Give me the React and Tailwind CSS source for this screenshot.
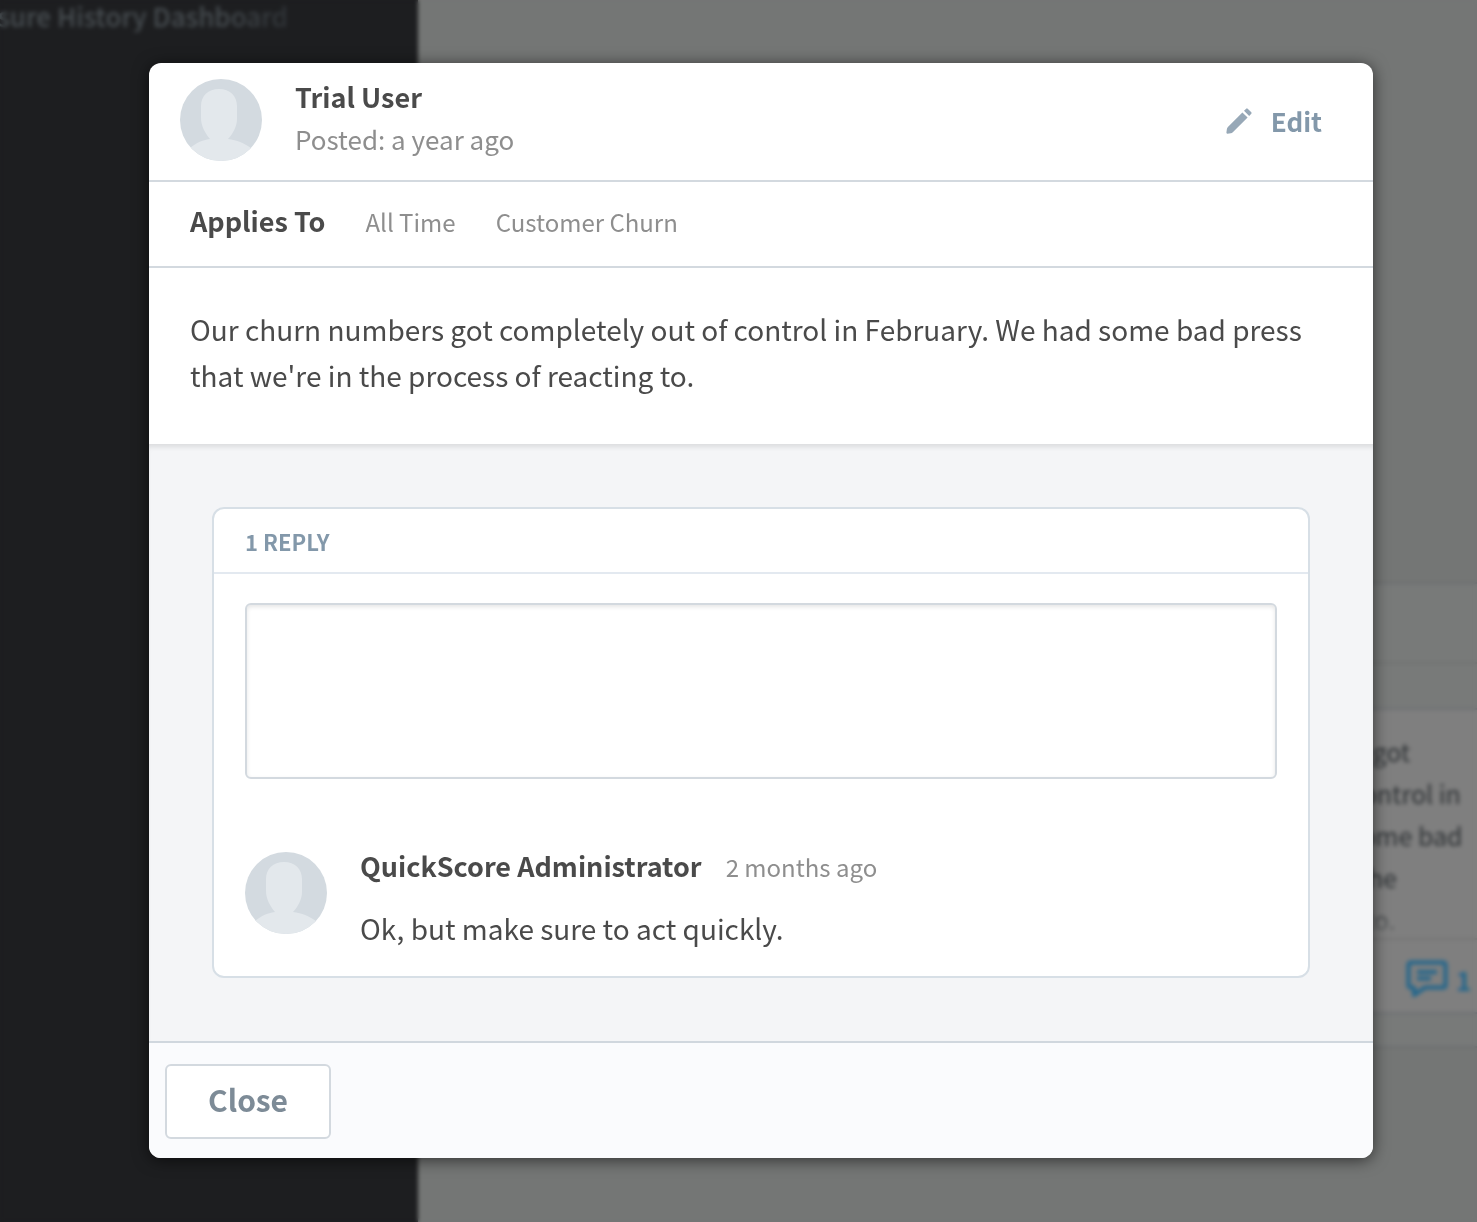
function Avatar() {
  return (
    <svg viewBox="0 0 82 82" className="size-[82px] shrink-0 rounded-full" aria-hidden="true">
      <rect width="82" height="82" fill="#d3dae0" />
      <path
        d="M39 10C50 10 57 17 57 27V40C57 47 53 55 48 60C57 61 64 64 71 69V82H10V69C16 64 22 61 30 60C25 54 21 47 21 39V27C21 17 28 10 39 10Z"
        fill="#e3e8ec"
      />
    </svg>
  );
}

function PencilIcon() {
  return (
    <svg viewBox="0 0 26 26" className="size-[26px] shrink-0" fill="#97a8b7" aria-hidden="true">
      <path d="M16.4 4.4L21.6 9.6L6.8 24.2Q6 25 4.8 25.2L1.4 25.7Q.3 25.8 .4 24.6L.9 20.9Q1.1 19.7 1.9 18.9Z" />
      <path d="M18 2.8L20.2 .7Q20.9 0 21.7 .7L25.3 4.3Q26 5 25.3 5.8L23.2 8Z" />
    </svg>
  );
}

function CommentIcon() {
  return (
    <svg viewBox="0 0 42 38" className="h-[38px] w-[42px]" fill="none" stroke="currentColor" aria-hidden="true">
      <path d="M5 2.5H37Q39.5 2.5 39.5 5V25Q39.5 27.5 37 27.5H19L8 35V27.5H5Q2.5 27.5 2.5 25V5Q2.5 2.5 5 2.5Z" strokeWidth="4" strokeLinejoin="round" />
      <path d="M11 12H31M11 18.5H25" strokeWidth="4" />
    </svg>
  );
}

function Dashboard() {
  return (
    <div className="flex min-h-screen overflow-hidden" aria-hidden="true">
      <aside className="w-[418px] shrink-0 bg-[#1d1e20]">
        <div className="flex w-[288px] justify-end overflow-hidden whitespace-nowrap bg-linear-to-r from-[#484e52] from-75% to-[#303438] bg-clip-text text-[26px] leading-8 font-medium text-transparent">
          Measure History Dashboard
        </div>
      </aside>
      <main className="flex flex-1 flex-col pt-[582px]">
        <section className="border-y-2 border-[#6c6e70] bg-[#787a79] pb-8">
          <div className="h-20 border-b-2 border-[#707271]" />
          <div className="h-11" />
          <article className="border-y-2 border-[#6c6f73] bg-[#7f7f7f] pl-[722px]">
            <p className="h-[228px] bg-linear-to-b from-[#2c3033] from-80% to-[#686a6b] bg-clip-text pt-5 text-[25px] leading-[42px] whitespace-nowrap text-transparent">
              Our churn numbers got
              <br />
              completely out of control in
              <br />
              February. We had some bad
              <br />
              press that we&apos;re in the
              <br />
              process of reacting to.
            </p>
            <div className="flex h-[74px] items-center justify-end gap-2 border-t-2 border-[#737474] pt-1.5 pr-1.5 text-[26px] font-bold text-[#22668c]">
              <CommentIcon />
              <span>1</span>
            </div>
          </article>
        </section>
      </main>
    </div>
  );
}

export default function App() {
  return (
    <div className="relative min-h-screen overflow-hidden bg-[#747675] font-['Noto_Sans_CJK_SC','Noto_Sans',sans-serif] text-[#4a4a4a]">
      <Dashboard />
      <div className="absolute inset-0 pt-[63px] pr-[104px] pb-16 pl-[149px] backdrop-blur-[2px]">
        <div role="dialog" aria-modal="true" aria-label="Note" className="overflow-hidden rounded-xl bg-white shadow-[0_2px_16px_rgba(0,0,0,0.6)]">
          <header className="flex items-start border-b-2 border-[#d3d9df] px-[31px] pt-4 pb-[17px]">
            <Avatar />
            <div className="ml-[33px] flex-1">
              <h2 className="text-[27px] leading-9 font-bold">Trial User</h2>
              <p className="text-[26px] leading-[48px] text-[#8e8e8e]">Posted: a year ago</p>
            </div>
            <button type="button" className="mr-5 flex items-center gap-[19px] self-center text-[26px] leading-10 font-bold text-[#8398aa]">
              <PencilIcon />
              Edit
            </button>
          </header>

          <div className="flex items-baseline gap-10 border-b-2 border-[#d3d9df] px-[41px] pt-[19px] pb-6">
            <h3 className="text-[27px] leading-10 font-bold">Applies To</h3>
            <span className="text-[24px] leading-10 text-[#8e8e8e]">All Time</span>
            <span className="text-[24px] leading-10 text-[#8e8e8e]">Customer Churn</span>
          </div>

          <p className="px-[41px] pt-[38px] pb-[46px] text-[28px] leading-[46px]">
            Our churn numbers got completely out of control in February. We had some bad press that we&apos;re in the process of reacting to.
          </p>

          <div className="bg-[#f4f5f7] p-[63px] shadow-[inset_0_5px_5px_-2px_rgba(0,0,0,0.1)]">
            <section className="rounded-xl border-2 border-[#d7dfe6] bg-white">
              <h3 className="border-b-2 border-[#e3e9f0] px-[31px] pt-3 pb-[11px] text-[22px] leading-10 font-bold text-[#8398aa]">
                1 REPLY
              </h3>
              <div className="px-[31px] pt-[29px] pb-[23px]">
                <textarea
                  aria-label="Write a reply"
                  className="block h-44 w-full resize-none rounded-md border-2 border-[#d3d9df] px-4 py-3 text-[28px] shadow-[inset_0_2px_4px_rgba(0,0,0,0.1)] outline-none"
                />
                <div className="mt-[73px] flex items-start">
                  <Avatar />
                  <div className="ml-[33px]">
                    <div className="flex items-baseline gap-6">
                      <h4 className="text-[27px] leading-7 font-bold">QuickScore Administrator</h4>
                      <span className="text-[24px] leading-7 text-[#8e8e8e]">2 months ago</span>
                    </div>
                    <p className="mt-[22px] text-[28px] leading-[50px]">Ok, but make sure to act quickly.</p>
                  </div>
                </div>
              </div>
            </section>
          </div>

          <footer className="border-t-2 border-[#d0d7de] bg-[#fafbfd] px-4 pt-[21px] pb-[19px]">
            <button type="button" className="block rounded-md border-2 border-[#d3d9df] bg-white px-[41px] pt-[13px] pb-[17px] text-[30px] leading-[41px] font-bold text-[#7d8b97]">
              Close
            </button>
          </footer>
        </div>
      </div>
    </div>
  );
}
